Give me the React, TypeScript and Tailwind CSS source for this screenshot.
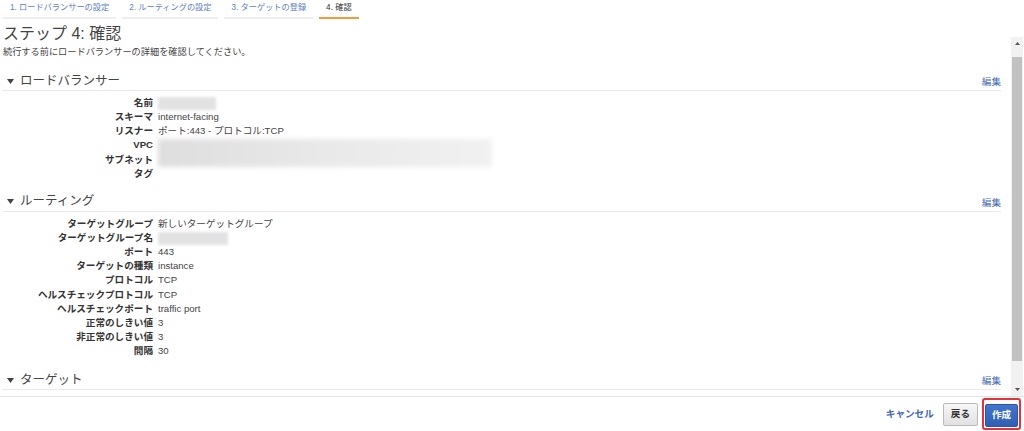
import React from "react";

type Row = { label: string; value?: string; blur?: "name" | "net" | "tg" | "skip" };

const lbRows: Row[] = [
  { label: "名前", blur: "name" },
  { label: "スキーマ", value: "internet-facing" },
  { label: "リスナー", value: "ポート:443 - プロトコル:TCP" },
  { label: "VPC", blur: "net" },
  { label: "サブネット", blur: "skip" },
  { label: "タグ", value: "" },
];

const routingRows: Row[] = [
  { label: "ターゲットグループ", value: "新しいターゲットグループ" },
  { label: "ターゲットグループ名", blur: "tg" },
  { label: "ポート", value: "443" },
  { label: "ターゲットの種類", value: "instance" },
  { label: "プロトコル", value: "TCP" },
  { label: "ヘルスチェックプロトコル", value: "TCP" },
  { label: "ヘルスチェックポート", value: "traffic port" },
  { label: "正常のしきい値", value: "3" },
  { label: "非正常のしきい値", value: "3" },
  { label: "間隔", value: "30" },
];

const tabs = [
  { text: "1. ロードバランサーの設定", active: false },
  { text: "2. ルーティングの設定", active: false },
  { text: "3. ターゲットの登録", active: false },
  { text: "4. 確認", active: true },
];

function Caret() {
  return (
    <svg width="7" height="5" viewBox="0 0 7 5" className="shrink-0">
      <polygon points="0,0 7,0 3.5,5" fill="#444" />
    </svg>
  );
}

function SectionHeader({ title }: { title: string }) {
  return (
    <div className="h-[19px] flex items-center border-b border-[#eaeaea] pl-[4px]">
      <Caret />
      <span className="ml-[6px] text-[12.5px] text-[#444]">{title}</span>
      <a className="ml-auto text-[9.6px] text-[#4a6db4] pt-[2px]">編集</a>
    </div>
  );
}

function Value({ row }: { row: Row }) {
  if (row.blur === "name")
    return <div className="w-[58px] h-[13px] mt-[1px] bg-[#e2e2e2] blur-[1.5px]" />;
  if (row.blur === "tg")
    return <div className="w-[70px] h-[13px] mt-[1px] bg-[#e2e2e2] blur-[1.5px]" />;
  return <span className="text-[#444]">{row.value}</span>;
}

function Rows({ rows }: { rows: Row[] }) {
  return (
    <div className="grid grid-cols-[150px_1fr] gap-x-[5px] auto-rows-[14.15px] pt-[5px] text-[9.6px] leading-[14.15px]">
      {rows.map((r) => (
        <React.Fragment key={r.label}>
          <div className="text-right font-bold text-[#333] whitespace-nowrap">{r.label}</div>
          {r.blur === "net" ? (
            <div className="row-span-2 pt-[1px]">
              <div className="w-[334px] h-[28px] blur-[2.5px] bg-gradient-to-r from-[#dedede] via-[#e9e9e9] to-[#f1f1f1]" />
            </div>
          ) : r.blur === "skip" ? null : (
            <div>
              <Value row={r} />
            </div>
          )}
        </React.Fragment>
      ))}
    </div>
  );
}

function Scrollbar() {
  return (
    <div className="w-[12px] mt-[18px] mr-[1px] flex flex-col bg-[#f1f1f1]">
      <div className="h-[13px] flex items-center justify-center">
        <svg width="5" height="3" viewBox="0 0 5 3">
          <polygon points="0,3 5,3 2.5,0" fill="#555" />
        </svg>
      </div>
      <div className="h-[7px]" />
      <div className="h-[304px] mx-[1px] bg-[#c1c1c1]" />
      <div className="flex-1" />
      <div className="h-[13px] flex items-center justify-center">
        <svg width="5" height="3" viewBox="0 0 5 3">
          <polygon points="0,0 5,0 2.5,3" fill="#555" />
        </svg>
      </div>
    </div>
  );
}

export default function App() {
  return (
    <div className="w-[1024px] h-[431px] bg-white flex flex-col overflow-hidden font-['Liberation_Sans','Noto_Sans_CJK_JP',sans-serif]">
      {/* TABS */}
      <div className="h-[19px] flex gap-[6px] pl-[3px]">
        {tabs.map((t) => (
          <div
            key={t.text}
            className={`px-[7px] h-[19px] flex items-center text-[8.2px] border-b-2 ${
              t.active ? "border-[#f39c3c] text-[#333]" : "border-[#eeeeee] text-[#5b80c2]"
            }`}
          >
            {t.text}
          </div>
        ))}
      </div>

      {/* BODY */}
      <div className="flex-1 min-h-0 flex">
        <div className="flex-1 min-w-0 pl-[3px] pr-[10px]">
          <h1 className="mt-[5px] text-[16px] leading-[20px] text-[#444]">ステップ 4: 確認</h1>
          <p className="mt-[2px] text-[9.2px] leading-[12px] text-[#444]">
            続行する前にロードバランサーの詳細を確認してください。
          </p>

          <div className="mt-[14px]">
            <SectionHeader title="ロードバランサー" />
            <Rows rows={lbRows} />
          </div>

          <div className="mt-[12px]">
            <SectionHeader title="ルーティング" />
            <Rows rows={routingRows} />
          </div>

          <div className="mt-[13px]">
            <SectionHeader title="ターゲット" />
          </div>
        </div>
        <Scrollbar />
      </div>

      {/* FOOTER */}
      <div className="h-[35px] border-t border-[#e4e4e4] flex items-center justify-end pr-[3px]">
        <a className="text-[9.6px] font-bold text-[#3f67b2] mr-[9px]">キャンセル</a>
        <button className="h-[23px] px-[7px] rounded-[2px] border border-[#b9b9b9] bg-gradient-to-b from-[#f7f7f7] to-[#e1e1e1] text-[9.6px] font-bold text-[#333] mr-[4px]">
          戻る
        </button>
        <div className="border-2 border-[#e2333b] rounded-[3px] p-[1px]">
          <button className="h-[23px] w-[33px] rounded-[2px] border border-[#2b56a3] bg-gradient-to-b from-[#4176cc] to-[#2f5fb3] text-[9.6px] font-bold text-white">
            作成
          </button>
        </div>
      </div>
    </div>
  );
}
